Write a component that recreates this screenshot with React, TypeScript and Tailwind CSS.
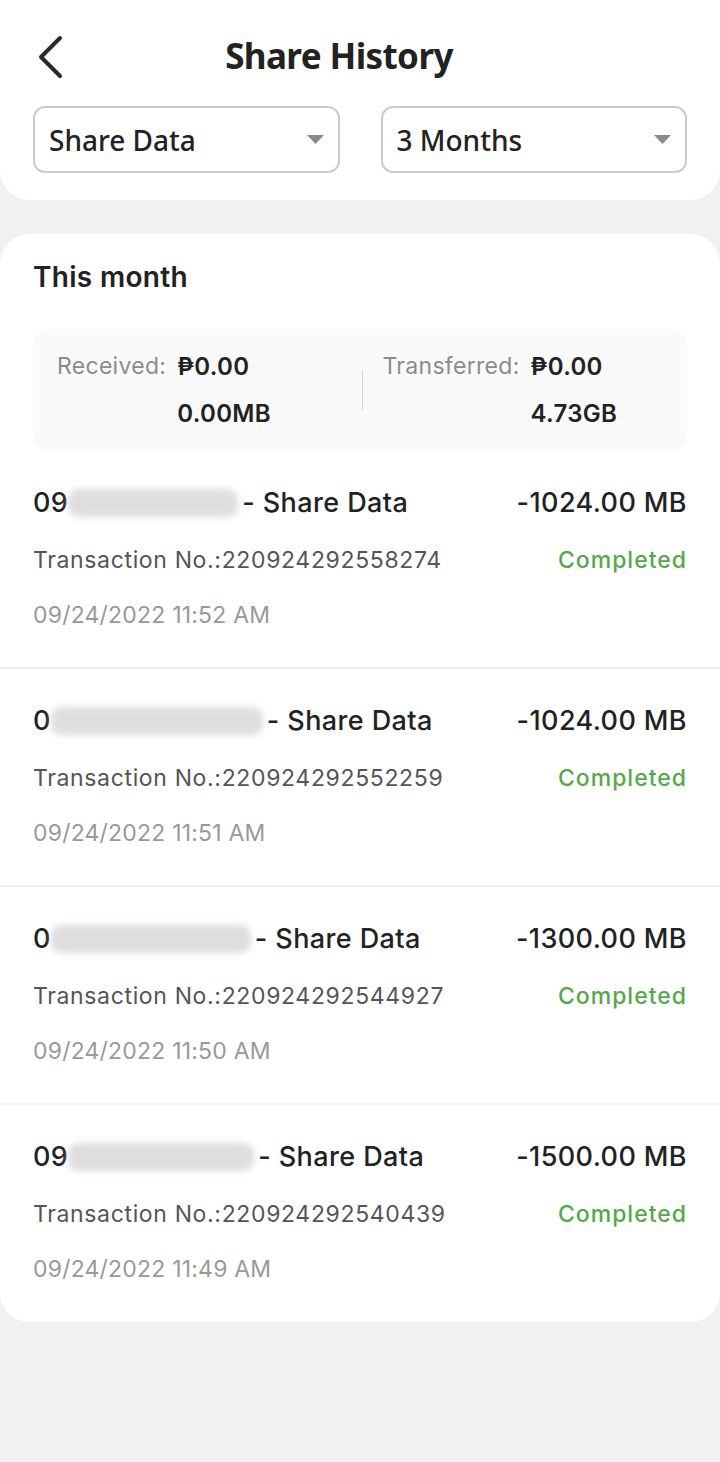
import React from "react";

// Share history rows
const rows = [
  { prefix: "09", blurW: 170, amount: "-1024.00 MB", txn: "220924292558274", date: "09/24/2022 11:52 AM" },
  { prefix: "0", blurW: 212, amount: "-1024.00 MB", txn: "220924292552259", date: "09/24/2022 11:51 AM" },
  { prefix: "0", blurW: 200, amount: "-1300.00 MB", txn: "220924292544927", date: "09/24/2022 11:50 AM" },
  { prefix: "09", blurW: 186, amount: "-1500.00 MB", txn: "220924292540439", date: "09/24/2022 11:49 AM" },
];

function Select({ label }: { label: string }) {
  return (
    <div className="flex-1 h-[67px] rounded-[12px] border-2 border-[#cbcbcb] flex items-center justify-between pl-[14px] pr-[14px]">
      <span className="text-[28px] font-medium text-[#222]" style={{ fontFamily: '"Noto Sans", sans-serif' }}>
        {label}
      </span>
      <svg width="17" height="10" viewBox="0 0 17 10">
        <path d="M0 0 H17 L8.5 9 Z" fill="#8a8a8a" />
      </svg>
    </div>
  );
}

function Amount({ label, value, sub }: { label: string; value: string; sub: string }) {
  return (
    <div className="flex gap-[11px]">
      <span className="text-[#8c8c8c] text-[23px] tracking-[0.3px]">{label}</span>
      <div className="flex flex-col gap-[11px] font-semibold text-[#222] text-[24px] tracking-[0.3px]">
        <span>{value}</span>
        <span>{sub}</span>
      </div>
    </div>
  );
}

export default function App() {
  return (
    <div className="min-h-[1462px] bg-[#f1f1f1] pb-10" style={{ fontFamily: 'Inter, "Open Sans", sans-serif' }}>
      <div className="bg-white rounded-b-[30px] px-[33px] pt-[30px] pb-[27px]">
        <div className="relative flex items-center justify-center h-[52px] pr-[42px]">
          <svg className="absolute left-[3px] top-[5px]" width="28" height="44" viewBox="0 0 28 44">
            <path d="M24 3 L5 22 L24 41" fill="none" stroke="#2a2a2a" strokeWidth="4" strokeLinecap="round" strokeLinejoin="round" />
          </svg>
          <h1 className="text-[35px] font-bold text-[#222] tracking-[-0.6px]" style={{ fontFamily: '"Noto Sans", sans-serif' }}>
            Share History
          </h1>
        </div>
        <div className="flex gap-[41px] mt-[24px]">
          <Select label="Share Data" />
          <Select label="3 Months" />
        </div>
      </div>

      <div className="bg-white rounded-[30px] mt-[34px] pt-[22px]">
        <h2 className="px-[33px] text-[28px] font-semibold text-[#222] tracking-[0.3px]">This month</h2>
        <div className="mx-[33px] mt-[31px] bg-[#fafafa] rounded-[16px] h-[122px] flex items-center">
          <div className="flex-1 pl-[24px]">
            <Amount label="Received:" value="₱0.00" sub="0.00MB" />
          </div>
          <div className="w-px h-[40px] bg-[#d8d8d8]" />
          <div className="flex-1 pl-[20px]">
            <Amount label="Transferred:" value="₱0.00" sub="4.73GB" />
          </div>
        </div>

        <div>
          {rows.map((r, i) => (
            <div
              key={r.txn}
              className={i < rows.length - 1 ? "border-b-2 border-[#efefef] px-[33px] pt-[32px] pb-[35px]" : "px-[33px] pt-[32px] pb-[36px]"}
            >
              <div className="flex items-center justify-between h-[40px] text-[27px] font-medium text-[#222] tracking-[0.4px]">
                <div className="flex items-center">
                  <span>{r.prefix}</span>
                  <span className="inline-block h-[28px] rounded-[10px] bg-[#d6d6d8] blur-[3px] opacity-80" style={{ width: r.blurW }} />
                  <span className="ml-[4px]">- Share Data</span>
                </div>
                <span>{r.amount}</span>
              </div>
              <div className="flex items-center justify-between mt-[20px] text-[23px] tracking-[0.65px]">
                <span className="text-[#555]">Transaction No.:{r.txn}</span>
                <span className="text-[#55a84a] font-medium tracking-[1px]">Completed</span>
              </div>
              <div className="mt-[20px] text-[23px] tracking-[0.2px] text-[#999]">{r.date}</div>
            </div>
          ))}
        </div>
      </div>
    </div>
  );
}
